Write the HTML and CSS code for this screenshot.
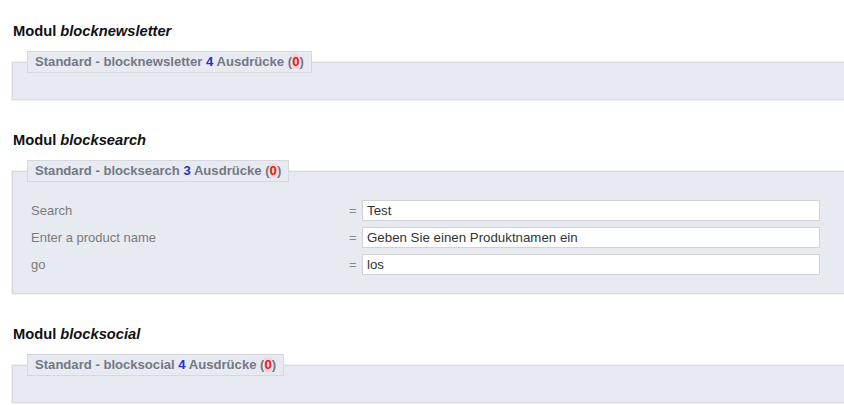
FILE: index.html
```html
<!DOCTYPE html>
<html>
<head>
<meta charset="utf-8">
<link rel="stylesheet" href="styles.css">
</head>
<body>
<div class="page">
  <h2 class="mod-title">Modul <em>blocknewsletter</em></h2>
  <fieldset class="box">
    <legend class="box-legend">Standard - blocknewsletter <span class="count">4</span> Ausdrücke (<span class="missing">0</span>)</legend>
    <div class="box-empty"></div>
  </fieldset>

  <h2 class="mod-title">Modul <em>blocksearch</em></h2>
  <fieldset class="box">
    <legend class="box-legend">Standard - blocksearch <span class="count">3</span> Ausdrücke (<span class="missing">0</span>)</legend>
    <div class="rows">
      <div class="row"><span class="label">Search</span><span class="eq">=</span><input class="field" type="text" value="Test"></div>
      <div class="row"><span class="label">Enter a product name</span><span class="eq">=</span><input class="field" type="text" value="Geben Sie einen Produktnamen ein"></div>
      <div class="row"><span class="label">go</span><span class="eq">=</span><input class="field" type="text" value="los"></div>
    </div>
  </fieldset>

  <h2 class="mod-title">Modul <em>blocksocial</em></h2>
  <fieldset class="box">
    <legend class="box-legend">Standard - blocksocial <span class="count">4</span> Ausdrücke (<span class="missing">0</span>)</legend>
    <div class="box-empty"></div>
  </fieldset>
</div>
</body>
</html>
```
FILE: styles.css
```css
html, body {
  margin: 0;
  padding: 0;
  background: #ffffff;
  overflow: hidden;
}
body {
  font-family: "Liberation Sans", Arial, sans-serif;
  font-size: 13px;
  color: #333;
}
.page {
  padding: 23px 0 0 12px;
  width: 860px;
}
.mod-title {
  margin: 0 0 12px 1px;
  font-size: 14.7px;
  line-height: 16px;
  font-weight: bold;
  color: #111;
}
.mod-title em {
  font-style: italic;
}
.box {
  margin: 0 0 32px 0;
  padding: 0 14px 0 14px;
  border: 1px solid #d9dade;
  box-shadow: 0 0 0 1px #f1f1f3;
  background: #e8eaf2;
  min-width: 0;
}
.box-legend {
  padding: 2px 7px 2px 7px;
  line-height: 16px;
  border: 1px solid #d6d8de;
  background: #e8eaf2;
  font-weight: bold;
  font-size: 13.1px;
  color: #737884;
}
.count {
  color: #2430c8;
}
.missing {
  color: #e01818;
  background: #f6d6d8;
}
.box-empty {
  height: 26px;
}
.rows {
  display: flex;
  flex-direction: column;
  gap: 6px;
  padding: 18px 0 18px 4px;
}
.row {
  display: flex;
  align-items: center;
  height: 21px;
}
.label {
  width: 318px;
  color: #7a7a7a;
  font-size: 13px;
}
.eq {
  width: 13px;
  color: #8a8a8a;
  font-size: 13px;
}
.field {
  box-sizing: border-box;
  width: 458px;
  height: 21px;
  margin: 0;
  padding: 0 4px;
  border: 1px solid #d2d2d2;
  background: #fff;
  font-family: "Liberation Sans", Arial, sans-serif;
  font-size: 13.3px;
  color: #333;
  outline: none;
}
```
